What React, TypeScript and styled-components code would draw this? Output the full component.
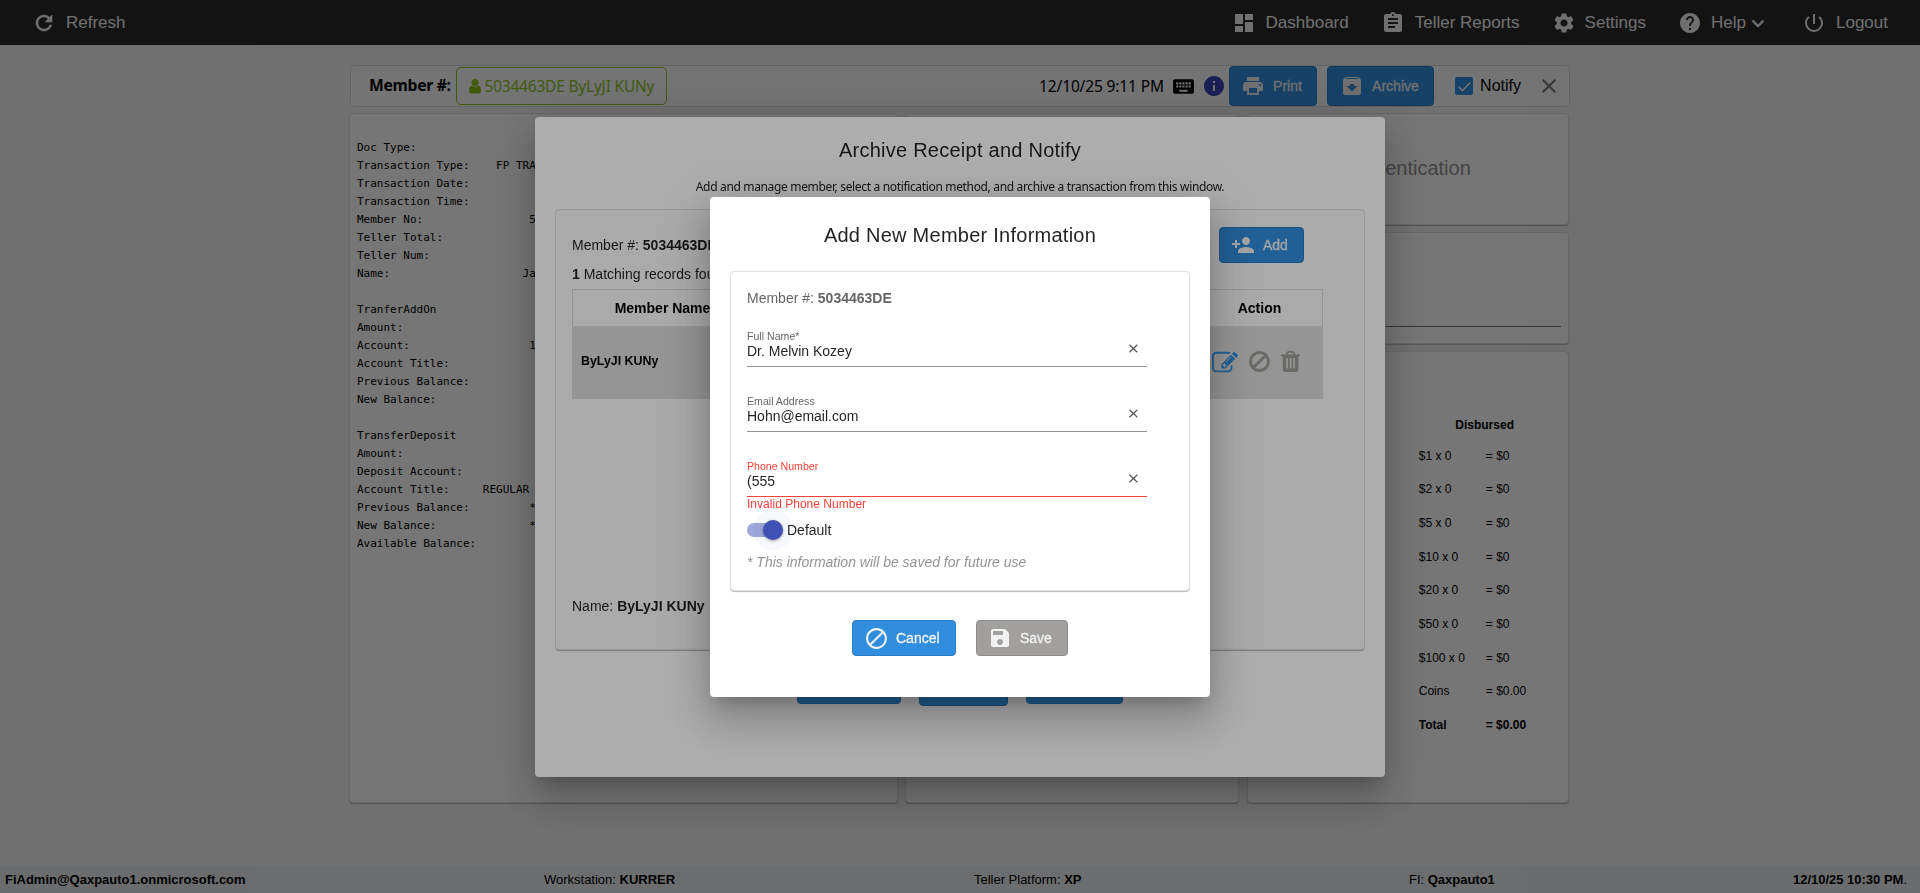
import React from 'react';
import styled, { createGlobalStyle, css } from 'styled-components';
import { MdDashboard, MdAssignment, MdSettings, MdHelp, MdPowerSettingsNew, MdPrint, MdArchive, MdKeyboard, MdInfo, MdClose, MdCheck, MdPersonAdd, MdBlock, MdSave } from 'react-icons/md';

const sans = `"Liberation Sans", Arial, sans-serif`;
const segoe = `"Noto Sans", "Open Sans", sans-serif`;

const Global = createGlobalStyle`
  * { box-sizing: border-box; }
  body { margin: 0; background: #f2f2f2; font-family: ${sans}; font-size: 14px; color: #000; overflow: hidden; }
  svg { display: block; flex: none; }
`;
const Page = styled.div`height: 893px; display: flex; flex-direction: column;`;
const NavBar = styled.nav`
  height: 45px; flex: none; background: #2b2b2b; color: #f2f2f2; display: flex; align-items: center;
  padding: 0 32px; font-size: 17px;
`;
const NavItem = styled.div<{ $ml?: number; $gap?: number; $w?: number }>`
  display: flex; align-items: center; gap: ${p => p.$gap ?? 10}px; margin-left: ${p => p.$ml ?? 0}px; white-space: nowrap;
  ${p => p.$w && css`width: ${p.$w}px;`}
`;
const Spacer = styled.div`flex: 1;`;
const Content = styled.main`width: 1220px; margin: 20px 0 0 350px; flex: 1;`;
const Toolbar = styled.header`
  height: 42px; border: 1px solid #d6d6d6; border-radius: 5px; background: #fafafa; display: flex; align-items: center;
  font-size: 16px; padding: 0 8px 0 18px; white-space: nowrap;
`;
const MemberLabel = styled.b`font: 700 15.7px ${segoe}; letter-spacing: -0.3px; width: 87px; padding-bottom: 2px;`;
const MemberChip = styled.div`
  height: 38px; width: 211px; border: 1px solid #8fc31f; border-radius: 5px; color: #8fc31f; display: flex; align-items: center; gap: 3.5px;
  padding: 1px 0 0 12px; font: 15.4px ${segoe}; letter-spacing: -0.15px;
`;
const Stamp = styled.span`font: 15.5px ${segoe}; letter-spacing: -0.14px; width: 132px;`;
const Button = styled.button<{ $w: number; $h?: number; $gap?: number; $off?: boolean; $pad?: number }>`
  width: ${p => p.$w}px; height: ${p => p.$h ?? 36}px; padding: 0 0 0 ${p => p.$pad ?? 11}px; flex: none;
  display: flex; align-items: center; gap: ${p => p.$gap ?? 8}px; border-radius: 4px; border: 1px solid ${p => (p.$off ? '#8c8c8a' : '#2a7cc4')};
  background: ${p => (p.$off ? '#a1a09e' : '#318ede')}; color: #f2f2f2; font: 14px ${sans};
  -webkit-text-stroke: 0.3px;
`;
const Check = styled.span`width: 18px; height: 18px; background: #318ede; color: #fff; border-radius: 2px; margin: 0 7px 0 21px; display: grid; place-items: center;`;
const Panels = styled.section`display: grid; grid-template-columns: 549px 334px 322px; gap: 7px 7.4px; margin: 6px 0 0 -1px; height: 690px;`;
const Stack = styled.div`display: grid; grid-template-rows: 112px 112px 1fr; gap: 7px;`;
const Card = styled.div`background: #fefefe; border: 1px solid #e0e0e0; border-radius: 4px; box-shadow: 0 1px 1px rgba(0,0,0,.25);`;
const Receipt = styled.pre`margin: 0; padding: 25px 7px; font: 11px/18px "DejaVu Sans Mono", monospace;`;
const AuthTitle = styled.div`color: #929292; font-size: 20px; text-align: right; padding: 43px 97px 0 0;`;
const Line = styled.div`border-bottom: 1px solid #777; margin: 93px 7px 0;`;
const Cash = styled.div`padding: 63px 0 0 171px; font-size: 12px;`;
const CashHead = styled.b`display: block; padding-left: 36.5px; line-height: 20px; margin-bottom: 4px;`;
const CashRow = styled.div<{ $b?: boolean }>`
  height: 33.65px; display: flex; align-items: center; font-weight: ${p => (p.$b ? 700 : 400)};
  span:first-child { width: 67px; }
`;
const Footer = styled.footer`
  height: 27px; background: #e9ebee; display: grid; grid-template-columns: 539px 430px 435px 1fr auto; align-items: center;
  font-size: 13px; padding: 0 13px 0 5px; letter-spacing: -0.01px; white-space: nowrap;
`;

const Overlay = styled.div`position: fixed; inset: 0; background: rgba(0,0,0,.32); display: flex; justify-content: center; align-items: flex-start;`;
const Dialog = styled.div<{ $w: number; $h: number; $top: number }>`
  width: ${p => p.$w}px; height: ${p => p.$h}px; margin-top: ${p => p.$top}px; background: #fff; border-radius: 4px; color: rgba(0,0,0,.87);
  box-shadow: 0 11px 15px -7px rgba(0,0,0,.2), 0 24px 38px 3px rgba(0,0,0,.14), 0 9px 46px 8px rgba(0,0,0,.12);
`;
const Title = styled.h2<{ $top: number }>`margin: 0; padding-top: ${p => p.$top}px; font-size: 20px; line-height: 24px; font-weight: 400; text-align: center; letter-spacing: .25px;`;
const Intro = styled.p`margin: 16px 0 0; font: 12px/18px ${segoe}; letter-spacing: -.34px; text-align: center; color: #222; white-space: nowrap;`;
const Box = styled.section<{ $h: number; $m: string; $p: string; $shade?: boolean }>`
  height: ${p => p.$h}px; margin: ${p => p.$m}; padding: ${p => p.$p}; background: ${p => (p.$shade ? '#fbfbfb' : '#fff')}; border: 1px solid #e0e0e0; border-radius: 4px;
  box-shadow: 0 2px 1px -1px rgba(0,0,0,.2), 0 1px 1px rgba(0,0,0,.1);
`;
const Between = styled.div`display: flex; justify-content: space-between; height: 37px; align-items: flex-end; line-height: 36px;`;
const Found = styled.div`line-height: 22px;`;
const Table = styled.div`
  margin-top: 4px; width: 751px; border: 1px solid #dcdcdc; display: grid; grid-template-columns: 179px 1fr 125px; grid-template-rows: 38px 70px; color: #000;
`;
const Head = styled.b`display: grid; place-items: center; border-bottom: 2px solid #dcdce4;`;
const Cell = styled.div`display: flex; align-items: center; background: #dcdcdc; font-size: 12.4px; font-weight: 700; color: #9c9c98;`;
const NameCell = styled(Cell)`padding: 0 0 4px 8px; color: #000;`;
const Actions = styled(Cell)`padding: 0 0 3px 15px; gap: 11px;`;
const Named = styled.div`margin-top: 197px; line-height: 20px;`;
const Buttons = styled.div<{ $mt: number; $gap: number }>`display: flex; justify-content: center; align-items: flex-start; gap: ${p => p.$gap}px; margin-top: ${p => p.$mt}px;`;

const MemberLine = styled.div`color: #666; line-height: 20px;`;
const Field = styled.div<{ $bad?: boolean; $mt: number }>`
  width: 400px; height: 40px; margin-top: ${p => p.$mt}px; border-bottom: 1px solid ${p => (p.$bad ? '#f44336' : '#949494')};
  display: grid; grid-template-columns: 1fr 13px; align-items: end; padding-right: 7px;
`;
const Label = styled.label<{ $bad?: boolean }>`display: block; font-size: 10.6px; line-height: 13px; color: ${p => (p.$bad ? '#f44336' : '#666')};`;
const Value = styled.div`font-size: 14px; line-height: 17px; padding-bottom: 6px; letter-spacing: -.01px;`;
const Clear = styled.svg`margin-bottom: 11px;`;
const ErrorText = styled.div`color: #f44336; font-size: 12px; line-height: 14px; letter-spacing: .02px;`;
const ToggleRow = styled.div`display: flex; align-items: center; gap: 4px; height: 24px; margin-top: 7px;`;
const Track = styled.span`width: 36px; height: 14px; border-radius: 7px; background: #9fa8da; display: flex; align-items: center; justify-content: flex-end;`;
const Thumb = styled.span`width: 20px; height: 20px; flex: none; border-radius: 50%; background: #3f51b5; box-shadow: 0 0 0 10px rgba(63,81,181,.04), 0 1px 3px rgba(0,0,0,.35);`;
const Note = styled.div`font-style: italic; color: #949494; line-height: 20px; margin-top: 10px;`;

const left = (label: string, v: string, col: number) => label.padEnd(col) + v;
const receipt = [
  'Doc Type:', left('Transaction Type:', 'FP TRA', 21), 'Transaction Date:', 'Transaction Time:', left('Member No:', '5', 26),
  'Teller Total:', 'Teller Num:', left('Name:', 'Ja', 25), '', 'TranferAddOn', 'Amount:', left('Account:', '1', 26), 'Account Title:',
  'Previous Balance:', 'New Balance:', '', 'TransferDeposit', 'Amount:', 'Deposit Account:', left('Account Title:', 'REGULAR', 19),
  left('Previous Balance:', '*', 26), left('New Balance:', '*', 26), 'Available Balance:',
].join('\n');

const cash = [['$1 x 0', '$0'], ['$2 x 0', '$0'], ['$5 x 0', '$0'], ['$10 x 0', '$0'], ['$20 x 0', '$0'], ['$50 x 0', '$0'], ['$100 x 0', '$0'], ['Coins', '$0.00']];

const RefreshIcon = () => (
  <svg width="24" height="24" viewBox="0 0 24 24" fill="currentColor" stroke="currentColor" strokeWidth="0.6">
    <path d="M17.650 6.350A7.958 7.958 0 0 0 12 4c-4.420 0-7.990 3.580-7.990 8s3.570 8 7.990 8c3.730 0 6.840-2.550 7.730-6h-2.080A5.990 5.990 0 0 1 12 18c-3.310 0-6-2.690-6-6s2.690-6 6-6c1.660 0 3.140.690 4.220 1.780L13 11h7V4l-2.350 2.350z" />
  </svg>
);
const UserIcon = () => (
  <svg width="12" height="14.4" viewBox="0 0 1280 1536" fill="currentColor">
    <path d="M1280 1271q0 109-62.5 187T1067 1536H213Q125 1536 62.5 1458T0 1271q0-85 8.5-160.5t31.5-152 58.500-131 94-89T327 704q131 128 313 128t313-128q76 0 134.500 34.500t94 89 58.500 131 31.500 152 8.500 160.500zM1024 384q0 159-112.500 271.500T640 768 368.500 655.500 256 384t112.500-271.500T640 0t271.500 112.500T1024 384z" />
  </svg>
);
const EditIcon = () => (
  <svg width="26" height="22.3" viewBox="0 0 1792 1536" fill="#318ede">
    <path d="M888 1184l116-116-152-152-116 116v56h96v96h56zm440-720q-16-16-33 1l-350 350q-17 17-1 33t33-1l350-350q17-17 1-33zm80 594v190q0 119-84.500 203.500T1120 1536H288q-119 0-203.500-84.500T0 1248V416q0-119 84.500-203.500T288 128h832q63 0 117 25 15 7 18 23 3 17-9 29l-49 49q-14 14-32 8-23-6-45-6H288q-66 0-113 47t-47 113v832q0 66 47 113t113 47h832q66 0 113-47t47-113v-126q0-13 9-22l64-64q15-15 35-7t20 29zm-96-738l288 288-672 672H640V992zm444 132l-92 92-288-288 92-92q28-28 68-28t68 28l152 152q28 28 28 68t-28 68z" />
  </svg>
);
const BanIcon = () => (
  <svg width="21" height="21" viewBox="0 0 21 21" fill="none" stroke="currentColor" strokeWidth="3">
    <circle cx="10.500" cy="10.500" r="9" /><path d="M4.200 16.800 16.800 4.200" />
  </svg>
);
const TrashIcon = () => (
  <svg width="19.2" height="21" viewBox="0 0 1408 1536" fill="currentColor">
    <path d="M512 1248V544q0-14-9-23t-23-9h-64q-14 0-23 9t-9 23v704q0 14 9 23t23 9h64q14 0 23-9t9-23zm256 0V544q0-14-9-23t-23-9h-64q-14 0-23 9t-9 23v704q0 14 9 23t23 9h64q14 0 23-9t9-23zm256 0V544q0-14-9-23t-23-9h-64q-14 0-23 9t-9 23v704q0 14 9 23t23 9h64q14 0 23-9t9-23zM480 256h448l-48-117q-7-9-17-11H546q-10 2-17 11zm928 32v64q0 14-9 23t-23 9h-96v948q0 83-47 143.500t-113 60.500H288q-66 0-113-58.500t-47-141.500V384H32q-14 0-23-9t-9-23v-64q0-14 9-23t23-9h309l70-167q15-37 54-63t79-26h320q40 0 79 26t54 63l70 167h309q14 0 23 9t9 23z" />
  </svg>
);
const Chevron = () => (
  <svg width="14" height="10" viewBox="0 0 14 10" fill="none" stroke="currentColor" strokeWidth="2.4"><path d="M1.500 2.500 7 8l5.500-5.500" /></svg>
);

function TextField({ label, value, mt, bad }: { label: string; value: string; mt: number; bad?: boolean }) {
  return (
    <Field $mt={mt} $bad={bad}>
      <div>
        <Label $bad={bad}>{label}</Label>
        <Value>{value}</Value>
      </div>
      <Clear width="13" height="13" viewBox="0 0 13 13"><path d="M2.500 2.800 10.300 10.200M10.300 2.800 2.500 10.200" stroke="#555" strokeWidth="1.200" /></Clear>
    </Field>
  );
}

export default function App() {
  return (
    <>
      <Global />
      <Page>
        <NavBar>
          <NavItem><RefreshIcon />Refresh</NavItem>
          <Spacer />
          <NavItem><MdDashboard size={24} />Dashboard</NavItem>
          <NavItem $ml={32}><MdAssignment size={24} />Teller Reports</NavItem>
          <NavItem $ml={32} $gap={9}><MdSettings size={24} />Settings</NavItem>
          <NavItem $ml={32} $gap={9}><MdHelp size={24} />Help<NavItem $ml={-4}><Chevron /></NavItem></NavItem>
          <NavItem $ml={37}><MdPowerSettingsNew size={24} />Logout</NavItem>
        </NavBar>
        <Content>
          <Toolbar>
            <MemberLabel>Member #:</MemberLabel>
            <MemberChip><UserIcon />5034463DE ByLyJI KUNy</MemberChip>
            <Spacer />
            <Stamp>12/10/25 9:11 PM</Stamp>
            <NavItem><MdKeyboard size={25} /></NavItem>
            <NavItem $ml={6}><MdInfo size={24} color="#3a46b8" /></NavItem>
            <NavItem $ml={3} $gap={10}>
              <Button $w={88} $h={40}><MdPrint size={24} />Print</Button>
              <Button $w={107} $h={40} $pad={12}><MdArchive size={24} />Archive</Button>
            </NavItem>
            <Check><MdCheck size={17} /></Check>Notify
            <NavItem $ml={16}><MdClose size={24} color="#777" /></NavItem>
          </Toolbar>
          <Panels>
            <Card><Receipt>{receipt}</Receipt></Card>
            <Card />
            <Stack>
              <Card><AuthTitle>Authentication</AuthTitle></Card>
              <Card><Line /></Card>
              <Card>
                <Cash>
                  <CashHead>Disbursed</CashHead>
                  {cash.map(([k, v]) => <CashRow key={k}><span>{k}</span><span>= {v}</span></CashRow>)}
                  <CashRow $b><span>Total</span><span>= $0.00</span></CashRow>
                </Cash>
              </Card>
            </Stack>
          </Panels>
        </Content>
        <Footer>
          <b>FiAdmin@Qaxpauto1.onmicrosoft.com</b>
          <span>Workstation: <b>KURRER</b></span>
          <span>Teller Platform: <b>XP</b></span>
          <span>FI: <b>Qaxpauto1</b></span>
          <span><b>12/10/25 10:30 PM</b>.</span>
        </Footer>
      </Page>
      <Overlay>
        <Dialog $w={850} $h={660} $top={117}>
          <Title $top={21}>Archive Receipt and Notify</Title>
          <Intro>Add and manage member, select a notification method, and archive a transaction from this window.</Intro>
          <Box $shade $h={441} $m="13px 20px 0" $p="16px 60px 0 16px">
            <Between>
              <span>Member #: <b>5034463DE</b></span>
              <Button $w={85} $gap={8} $pad={11}><MdPersonAdd size={24} />Add</Button>
            </Between>
            <Found><b>1</b> Matching records found</Found>
            <Table>
              <Head>Member Name</Head><Head /><Head>Action</Head>
              <NameCell>ByLyJI KUNy</NameCell><Cell />
              <Actions><EditIcon /><BanIcon /><TrashIcon /></Actions>
            </Table>
            <Named>Name: <b>ByLyJI KUNy</b></Named>
          </Box>
          <Buttons $mt={15} $gap={18}><Button $w={104} $h={39} /><Button $w={89} $h={41} /><Button $w={97} $h={39} /></Buttons>
        </Dialog>
      </Overlay>
      <Overlay>
        <Dialog $w={500} $h={500} $top={197}>
          <Title $top={26}>Add New Member Information</Title>
          <Box $h={320} $m="24px 20px 0" $p="16px 16px 0">
            <MemberLine>Member #: <b>5034463DE</b></MemberLine>
            <TextField label="Full Name*" value="Dr. Melvin Kozey" mt={19} />
            <TextField label="Email Address" value="Hohn@email.com" mt={25} />
            <TextField label="Phone Number" value="(555" mt={25} bad />
            <ErrorText>Invalid Phone Number</ErrorText>
            <ToggleRow><Track><Thumb /></Track>Default</ToggleRow>
            <Note>* This information will be saved for future use</Note>
          </Box>
          <Buttons $mt={29} $gap={20}>
            <Button $w={104} $gap={7}><MdBlock size={25} />Cancel</Button>
            <Button $w={92} $off><MdSave size={24} />Save</Button>
          </Buttons>
        </Dialog>
      </Overlay>
    </>
  );
}
